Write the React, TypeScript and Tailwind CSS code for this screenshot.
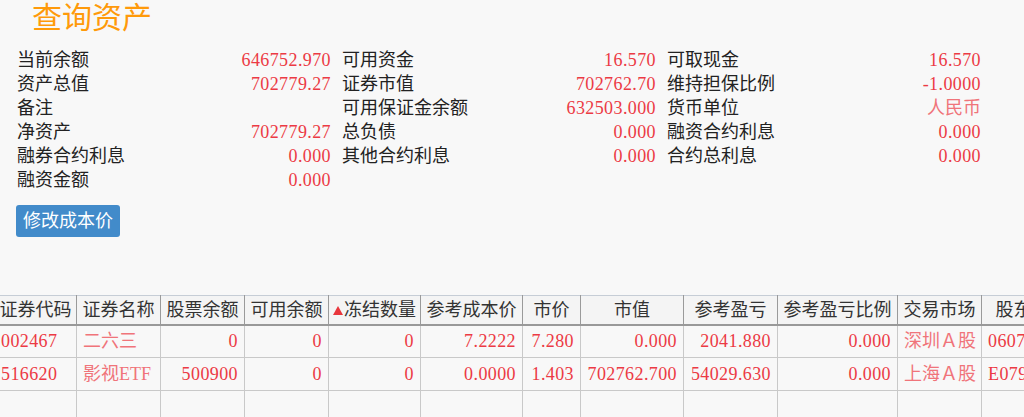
import React from 'react';

const num = "font-['Liberation_Serif',serif] text-[18px] tracking-[0.4px]";
const red = 'text-[#ec3a44]';
const pink = 'text-[#f0747a]';

type Info = { label: string; value?: string; cjk?: boolean };

const infoRows: Info[][] = [
  [
    { label: '当前余额', value: '646752.970' },
    { label: '可用资金', value: '16.570' },
    { label: '可取现金', value: '16.570' },
  ],
  [
    { label: '资产总值', value: '702779.27' },
    { label: '证券市值', value: '702762.70' },
    { label: '维持担保比例', value: '-1.0000' },
  ],
  [
    { label: '备注' },
    { label: '可用保证金余额', value: '632503.000' },
    { label: '货币单位', value: '人民币', cjk: true },
  ],
  [
    { label: '净资产', value: '702779.27' },
    { label: '总负债', value: '0.000' },
    { label: '融资合约利息', value: '0.000' },
  ],
  [
    { label: '融券合约利息', value: '0.000' },
    { label: '其他合约利息', value: '0.000' },
    { label: '合约总利息', value: '0.000' },
  ],
  [{ label: '融资金额', value: '0.000' }, { label: '' }, { label: '' }],
];

type Col = { title: string; width: number; align: 'left' | 'right'; cjk?: boolean; sort?: boolean };

const columns: Col[] = [
  { title: '证券代码', width: 82, align: 'left' },
  { title: '证券名称', width: 84, align: 'left', cjk: true },
  { title: '股票余额', width: 84, align: 'right' },
  { title: '可用余额', width: 84, align: 'right' },
  { title: '冻结数量', width: 92, align: 'right', sort: true },
  { title: '参考成本价', width: 102, align: 'right' },
  { title: '市价', width: 58, align: 'right' },
  { title: '市值', width: 103, align: 'right' },
  { title: '参考盈亏', width: 94, align: 'right' },
  { title: '参考盈亏比例', width: 120, align: 'right' },
  { title: '交易市场', width: 84, align: 'left', cjk: true },
  { title: '股东代码', width: 100, align: 'left' },
];

const holdings: string[][] = [
  ['002467', '二六三', '0', '0', '0', '7.2222', '7.280', '0.000', '2041.880', '0.000', '深圳Ａ股', '0607213458'],
  ['516620', '影视ETF', '500900', '0', '0', '0.0000', '1.403', '702762.700', '54029.630', '0.000', '上海Ａ股', 'E079821356'],
  ['', '', '', '', '', '', '', '', '', '', '', ''],
];

export default function App() {
  return (
    <div className="w-[1024px] h-[417px] overflow-hidden bg-[#f8f8f8] text-[18px] text-[#222] font-['Liberation_Serif','Noto_Sans_CJK_SC',serif]">
      {/* Title */}
      <h1 className="pl-[32px] h-[38px] leading-[36px] text-[30px] text-[#ff9a0a]">查询资产</h1>

      {/* Asset summary */}
      <div className="mt-[10px] pl-[17px] grid grid-cols-[314px_314px_314px] gap-x-[11px]">
        {infoRows.map((row, i) =>
          row.map((cell, j) => (
            <div key={`${i}-${j}`} className="flex h-[24px] items-center justify-between leading-[24px]">
              <span>{cell.label}</span>
              {cell.value && (
                <span className={cell.cjk ? pink : `${num} ${red}`}>{cell.value}</span>
              )}
            </div>
          ))
        )}
      </div>

      <button className="mt-[13px] ml-[16px] h-[32px] px-[7px] rounded-[3px] bg-[#428bca] text-white text-[18px] leading-[32px]">
        修改成本价
      </button>

      {/* Holdings table */}
      <div className="mt-[58px] overflow-hidden">
        <table className="table-fixed border-collapse ml-[-6px] w-[1087px]">
          <colgroup>
            {columns.map((c) => (
              <col key={c.title} style={{ width: c.width }} />
            ))}
          </colgroup>
          <thead>
            <tr className="h-[29px] bg-[#f4f4f4] border-t border-t-[#c6cdd6] border-b-2 border-b-[#999]">
              {columns.map((c) => (
                <th key={c.title} className="font-normal text-[#333] text-center whitespace-nowrap border-x border-x-[#9a9a9a] px-[2px] leading-[26px]">
                  {c.sort && (
                    <svg viewBox="0 0 10 9" className="inline-block w-[10px] h-[9px] mr-[1px] align-[1px]">
                      <path d="M5 0 L10 9 L0 9 Z" fill="#e8363c" />
                    </svg>
                  )}
                  {c.title}
                </th>
              ))}
            </tr>
          </thead>
          <tbody>
            {holdings.map((row, i) => (
              <tr key={i} className="h-[33px]">
                {row.map((v, j) => {
                  const c = columns[j];
                  return (
                    <td
                      key={j}
                      className={`border border-[#c9c9c9] px-[6px] whitespace-nowrap overflow-hidden ${
                        c.align === 'right' ? 'text-right' : 'text-left'
                      } ${c.cjk ? `${pink} text-[18px]` : `${num} ${red}`}`}
                    >
                      {v}
                    </td>
                  );
                })}
              </tr>
            ))}
          </tbody>
        </table>
      </div>
    </div>
  );
}
